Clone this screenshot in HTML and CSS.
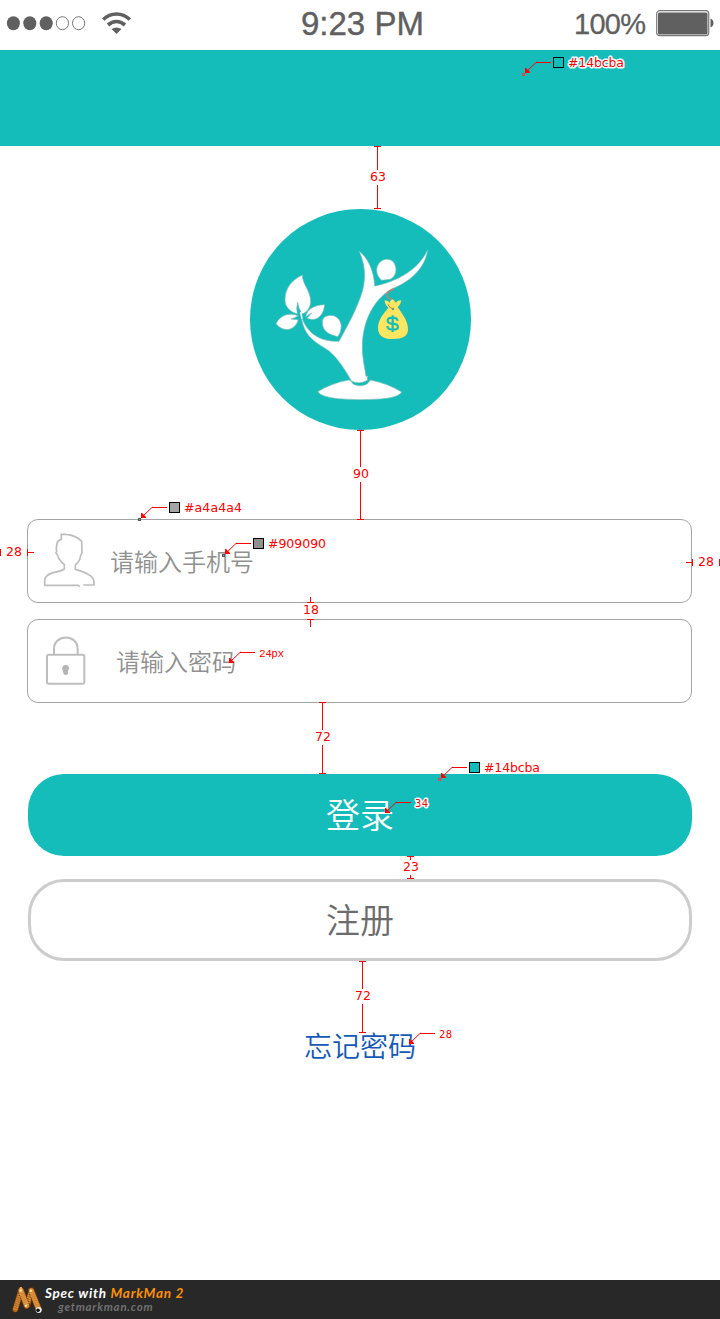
FILE: index.html
```
<!DOCTYPE html>
<html lang="zh-CN">
<head>
<meta charset="utf-8">
<title>登录</title>
<link rel="stylesheet" href="styles.css">
</head>
<body>
<div class="page">
  <header class="status">
    <svg class="status-signal" width="133" height="50" viewBox="0 0 133 50">
      <g fill="#606060"><ellipse cx="13.4" cy="23.2" rx="6.5" ry="7"/><ellipse cx="29.8" cy="23.2" rx="6.5" ry="7"/><ellipse cx="46.2" cy="23.2" rx="6.5" ry="7"/></g>
      <g fill="none" stroke="#777" stroke-width="1"><ellipse cx="62.4" cy="23.2" rx="6.1" ry="6.5"/><ellipse cx="78.6" cy="23.2" rx="6.1" ry="6.5"/></g>
      <g fill="none" stroke="#606060" stroke-width="3.7"><path d="M103.200 19.5Q109 14 116.500 14T129.800 19.5"/><path d="M108 25Q112 21.500 116.500 21.500T125 25"/></g>
      <path d="M111.5 29Q116.5 25.8 121.5 29L116.5 34Z" fill="#606060"/>
    </svg>
    <span class="status-time">9:23 PM</span>
    <span class="status-power">100%
      <svg width="58" height="28" viewBox="0 0 58 28"><rect x=".7" y=".7" width="52" height="25" rx="3" fill="#fff" stroke="#777" stroke-width="1.2"/><rect x="2" y="2.4" width="49.500" height="22" rx="1.5" fill="#606060"/><path d="M54.5 8.5Q57.5 10 57.5 13T54.5 17.5Z" fill="#606060"/></svg>
    </span>
  </header>
  <div class="navbar"></div>
  <main class="content">
    <svg class="logo" viewBox="30 27 663 663">
      <circle cx="361.5" cy="358.500" r="331.500" fill="#14bcba"/>
      <g fill="#fff" stroke="#78b9b8" stroke-width="2" stroke-linejoin="round">
        <path d="M357 153C382 172 402 210 404 258C470 245 535 210 563 149C556 205 510 246 455 267C395 302 361 378 368 463C370 490 376 510 378 529L383 528L382 541Q358 555 334 543C316 510 294 476 267 453C235 430 190 415 184 348C202 402 240 425 297 424C322 378 350 330 368 271C379 224 373 188 357 153Z"/>
        <path d="M187 225C187 252 211 272 212 303C212 322 202 337 186 342Q175 326 173 307Q168 323 172 342C151 335 135 322 135 299C135 262 159 238 187 225Z"/>
        <path d="M175 347C149 336 120 345 108 371C126 395 163 397 175 359L153 357Q165 354 175 347Z"/>
        <path d="M254 314C224 315 202 325 197 350L215 339L201 355C230 366 250 348 254 314Z"/>
        <path d="M293 410C260 403 246 389 247 364C249 348 264 345 281 347C300 354 306 372 303 386Q302 400 293 410Z"/>
        <path d="M425 241C407 226 406 205 417 190C429 174 451 174 462 188C473 207 468 229 451 238Z"/>
        <path d="M233 575Q275 549 326 540Q334 541 339 552Q361 563 381 552L391 540Q443 550 485 576Q475 593 422 597Q360 602 292 596Q242 590 233 575Z"/>
      </g>
      <path d="M182 336L186 356" stroke="#fff" stroke-width="5"/>
      <path d="M461 267C435 276 431 292 458 299" fill="none" stroke="#c68176" stroke-width="4"/>
      <path d="M434 301L444 303L448 308Q457 287 467 308L474 302L484 301Q483 313 473 322C490 345 505 366 504 389C503 409 489 416 459 417C428 417 414 406 414 383C415 356 432 340 445 323Q433 312 434 301Z" fill="#ffe661"/>
      <path d="M444 313Q448 325 458 326" fill="none" stroke="#b87c60" stroke-width="3"/><circle cx="459" cy="327" r="4" fill="#7b9884"/>
      <path d="M473 362Q471 353 458 353Q443 353 443 362Q443 370 458 371Q474 372 474 381Q474 389 458 389Q443 389 442 378M458 346V396" fill="none" stroke="#14bcba" stroke-width="6.500"/>
    </svg>
    <form class="login">
      <div class="field field-phone">
        <svg class="user-icon" width="54" height="56" viewBox="0 0 162 168">
          <path d="M71 7H55V22L46 26Q40 34 40 50L41 59L39 63L44 70Q46 82 64 98V111Q56 117 30 122Q5 130 5 146V160H105L111 164M121 159H153Q155 140 142 131Q124 119 97 112V99Q112 85 112 74L117 61L116 28Q99 10 70 7" fill="none" stroke="#bdbdbd" stroke-width="5"/>
        </svg>
        <span>请输入手机号</span>
      </div>
      <div class="field field-password">
        <svg class="lock-icon" width="40" height="50" viewBox="0 0 120 150">
          <g fill="none" stroke="#bebebe" stroke-width="6"><rect x="3" y="56" width="112" height="87" rx="5"/><path d="M24 56V39C24 -7 95 -7 95 39V56"/></g>
          <path d="M51 105Q47 101 49 94Q51 86 59 86Q67 86 69 94Q70 101 66 105V114Q59 120 53 114Z" fill="#b5b5b5"/>
        </svg>
        <span>请输入密码</span>
      </div>
      <div class="button primary">登录</div>
      <div class="button secondary">注册</div>
      <div class="forgot">忘记密码</div>
    </form>
  </main>
  <footer class="footer">
    <svg class="worm" width="32" height="28" viewBox="0 0 96 84">
      <g fill="none" stroke-linecap="round">
        <g stroke="#6b350b" stroke-width="19"><path d="M10 67L27 11"/><path d="M58 11L46 54"/></g>
        <g stroke="#b96c20" stroke-width="15"><path d="M10 67L27 11"/><path d="M46 54L58 11"/></g>
        <path d="M27 11L44 56M58 11L80 66" stroke="#663209" stroke-width="20"/>
        <path d="M27 11L44 56M58 11L80 66" stroke="#cf8430" stroke-width="16"/>
        <path d="M10 67L27 11L44 56L58 11L80 66" stroke="#e9ac58" stroke-width="12" stroke-linecap="butt" stroke-dasharray="1.500 5"/>
      </g>
      <circle cx="80" cy="69" r="9" fill="#eee"/><circle cx="78" cy="70" r="5.500" fill="#111"/>
      <g fill="#ffe7a0"><circle cx="26" cy="11" r="3.500"/><circle cx="57" cy="11" r="3.500"/><circle cx="42" cy="56" r="3.500"/></g>
    </svg>
    <div class="credit"><div class="credit-title">Spec with <span>MarkMan 2</span></div><div class="credit-site">getmarkman.com</div></div>
  </footer>

  <!-- Measurement and colour callouts over the screen -->
  <svg class="notes" width="720" height="1319" viewBox="0 0 720 1319">
    <defs>
      <g id="leader"><path class="diagonal" d="M.5 -.5L11.500 -11"/><path class="rule" d="M11 -10.500H26"/><path class="arrow" d="M0 0V-5H1L5 -1V0Z"/></g>
    </defs>
    <g class="rule">
      <path d="M374 146.500H381M377.500 146V170M377.500 185V209M374 208.500H381"/>
      <path d="M357 430.500H364M360.500 430V467M360.500 482V520M357 519.500H364"/>
      <path d="M.5 549V556M27.500 549V556M27 552.500H34"/>
      <path d="M692.500 559V566M686 562.500H693M719.500 559V566"/>
      <path d="M310.500 597V603M307 602.500H314M307 619.500H314M310.500 619V627"/>
      <path d="M319 702.500H326M322.500 702V730M322.500 745V774M319 773.500H326"/>
      <path d="M407 856.500H414M410.500 856V860M410.500 875V879M407 878.500H414"/>
      <path d="M359 961.500H366M362.500 961V989M362.500 1004V1033M359 1032.500H366"/>
    </g>
    <use href="#leader" x="525" y="73"/><use href="#leader" x="141" y="518"/><use href="#leader" x="225" y="554"/><use href="#leader" x="441" y="778"/>
    <use href="#leader" x="229" y="663"/><use href="#leader" x="385" y="813"/><use href="#leader" x="409" y="1044"/>
    <g fill="none" stroke="#f43c3c"><rect x="522.500" y="73.500" width="2" height="2"/><rect x="438.500" y="778.500" width="2" height="2"/></g>
    <g fill="#999" stroke="#555"><rect x="138.500" y="518.500" width="2" height="2"/><rect x="222.500" y="554.500" width="2" height="2"/></g>
    <g stroke="#000"><rect x="553.500" y="57.500" width="10" height="10" fill="#14bcba"/><rect x="169.500" y="502.500" width="10" height="10" fill="#a4a4a4"/><rect x="253.500" y="538.500" width="10" height="10" fill="#909090"/><rect x="469.500" y="762.500" width="10" height="10" fill="#14bcba"/></g>
    <g class="label">
      <text class="halo" x="568" y="67" textLength="56">#14bcba</text><text x="184" y="512" textLength="58">#a4a4a4</text><text x="268" y="548" textLength="58">#909090</text><text x="484" y="772" textLength="56">#14bcba</text>
      <text x="370" y="181" textLength="16">63</text><text x="353" y="478" textLength="16">90</text><text x="6" y="556" textLength="16">28</text><text x="698" y="566" textLength="16">28</text><text x="303" y="614" textLength="16">18</text><text x="315" y="741" textLength="16">72</text><text x="403" y="871" textLength="16">23</text><text x="355" y="1000" textLength="16">72</text>
    </g>
    <g class="label small"><text class="mono" x="259" y="657" textLength="25">24px</text><text class="halo" x="415" y="807" textLength="13">34</text><text x="439" y="1038" textLength="13">28</text></g>
  </svg>
</div>
</body>
</html>
```
FILE: styles.css
```
body { margin: 0; background: #fff; }
.page {
  position: relative;
  display: flex;
  flex-direction: column;
  width: 720px;
  height: 1319px;
  overflow: hidden;
  background: #fff;
  font-family: "Liberation Sans", "Noto Sans CJK SC", sans-serif;
}
svg { display: block; flex: none; }
.status {
  display: grid;
  grid-template-columns: 301px 1fr 146px;
  height: 50px;
  color: #606060;
  line-height: 48px;
}
.status-time { font-size: 33px; white-space: nowrap; -webkit-text-stroke: 0.4px #606060; }
.status-power { display: flex; align-items: center; gap: 11px; height: 47px; font-size: 29px; letter-spacing: -0.7px; -webkit-text-stroke: 0.3px #606060; }
.navbar { height: 96px; background: #14bcba; }
.content { flex: 1; padding: 63px 28px 0 27px; }
.logo { width: 221px; height: 221px; margin: 0 auto 89px 223px; }
.login { display: flex; flex-direction: column; }
.field {
  display: flex;
  align-items: center;
  box-sizing: border-box;
  height: 84px;
  margin-bottom: 16px;
  border: 1px solid #a4a4a4;
  border-radius: 11px;
  color: #909090;
  font-size: 24px;
  font-weight: 350;
}
.field span { padding-bottom: 2px; }
.field-phone { padding-left: 15px; gap: 13px; }
.user-icon { margin-bottom: 2px; }
.field-password { padding-left: 18px; gap: 30px; margin-bottom: 71px; }
.button {
  display: flex;
  align-items: center;
  justify-content: center;
  box-sizing: border-box;
  height: 82px;
  margin-left: 1px;
  padding-bottom: 4px;
  border-radius: 36px;
  font-size: 34px;
  font-weight: 350;
}
.primary { margin-bottom: 23px; background: #14bcba; color: #fff; }
.secondary { margin-bottom: 71px; border: 3px solid #ccc; color: #6c6c6c; }
.forgot { margin-left: 1px; color: #1559b7; font-size: 28px; font-weight: 350; line-height: 32px; text-align: center; }
.footer { display: flex; gap: 1px; height: 39px; padding-left: 12px; background: #282828; }
.worm { margin-top: 7px; }
.credit { padding-top: 6px; font-family: Lato, "Open Sans", sans-serif; font-style: italic; font-weight: 700; white-space: nowrap; }
.credit-title { color: #fff; font-size: 13.5px; line-height: 15px; letter-spacing: 0.73px; }
.credit-title span { color: #ff9000; }
.credit-site { margin-left: 13px; color: #707070; font-size: 11.5px; line-height: 11px; letter-spacing: 0.77px; }
.notes { position: absolute; left: 0; top: 0; }
.rule { fill: none; stroke: #f00; stroke-width: 1; shape-rendering: crispEdges; }
.diagonal { fill: none; stroke: #f00; stroke-width: 1; }
.arrow { fill: #f00; }
.label { fill: #f00; font-family: "DejaVu Sans", sans-serif; font-size: 12.5px; }
.small { font-family: "DejaVu Sans Mono", monospace; font-size: 10.5px; }
.mono { font-family: "Liberation Mono", monospace; font-size: 11px; }
.halo { paint-order: stroke; stroke: #fff; stroke-width: 3px; stroke-linejoin: round; }
```
